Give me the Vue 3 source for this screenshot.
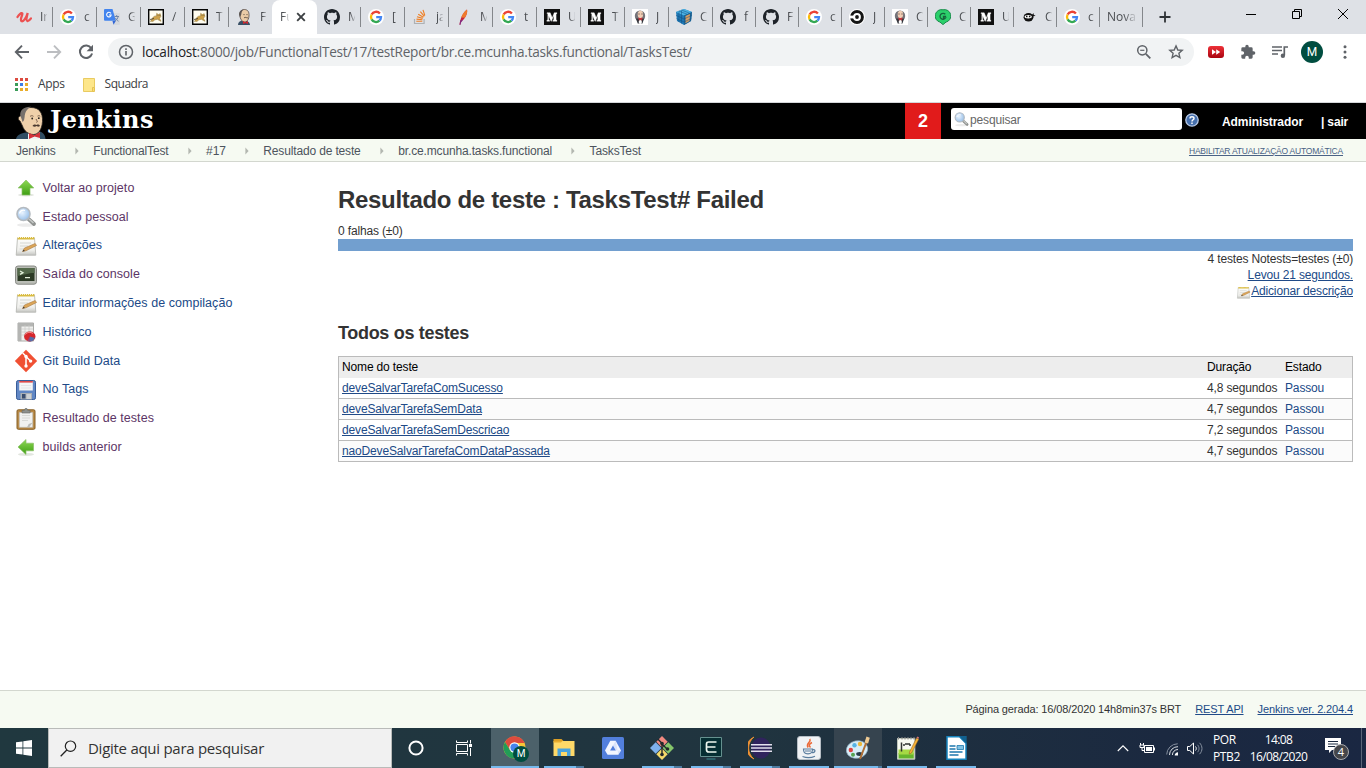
<script setup>
const tabs = [
  { icon: 'udemy', text: 'Ir' },
  { icon: 'google', text: 'c' },
  { icon: 'translate', text: 'G' },
  { icon: 'tomcat', text: '/' },
  { icon: 'tomcat', text: 'T' },
  { icon: 'butler', text: 'F', bare: true },
  { text: 'Fu', active: true },
  { icon: 'github', text: 'M' },
  { icon: 'google', text: '[' },
  { icon: 'stack', text: 'ja' },
  { icon: 'feather', text: 'M' },
  { icon: 'google', text: 't' },
  { icon: 'medium', text: 'U' },
  { icon: 'medium', text: 'T' },
  { icon: 'butlerbox', text: 'J' },
  { icon: 'cube', text: 'C' },
  { icon: 'github', text: 'f', slim: true },
  { icon: 'github', text: 'F', slim: true },
  { icon: 'google', text: 'c', slim: true },
  { icon: 'circle', text: 'J', slim: true },
  { icon: 'butlerbox', text: 'C', slim: true },
  { icon: 'green', text: 'C', slim: true },
  { icon: 'medium', text: 'U', slim: true },
  { icon: 'ninja', text: 'C', slim: true },
  { icon: 'google', text: 'c', slim: true },
  { text: 'Nova', wide: true, slim: true }
]

const crumbs = [
  'Jenkins',
  'FunctionalTest',
  '#17',
  'Resultado de teste',
  'br.ce.mcunha.tasks.functional',
  'TasksTest'
]

const tasks = [
  { icon: 'up', text: 'Voltar ao projeto', seen: true },
  { icon: 'search', text: 'Estado pessoal', seen: true },
  { icon: 'notepad', text: 'Alterações' },
  { icon: 'terminal', text: 'Saída do console', seen: true },
  { icon: 'notepad', text: 'Editar informações de compilação' },
  { icon: 'history', text: 'Histórico' },
  { icon: 'git', text: 'Git Build Data' },
  { icon: 'floppy', text: 'No Tags' },
  { icon: 'clipboard', text: 'Resultado de testes', seen: true },
  { icon: 'left', text: 'builds anterior', seen: true }
]

const rows = [
  { name: 'deveSalvarTarefaComSucesso', time: '4,8 segundos' },
  { name: 'deveSalvarTarefaSemData', time: '4,7 segundos' },
  { name: 'deveSalvarTarefaSemDescricao', time: '7,2 segundos' },
  { name: 'naoDeveSalvarTarefaComDataPassada', time: '4,7 segundos' }
]

const apps = [
  { icon: 'chrome', state: 'current' },
  { icon: 'explorer', state: 'stacked' },
  { icon: 'drive', state: 'idle' },
  { icon: 'gitbash', state: 'stacked' },
  { icon: 'editor', state: 'stacked' },
  { icon: 'eclipse', state: 'stacked' },
  { icon: 'java', state: 'open' },
  { icon: 'paint', state: 'lit' },
  { icon: 'npp', state: 'open' },
  { icon: 'writer', state: 'open' }
]
</script>

<template>
  <div class="screen">
    <svg class="sprite" width="0" height="0" aria-hidden="true">
      <defs>
        <linearGradient id="gGreen" x1="0" y1="0" x2="0" y2="1"><stop offset="0" stop-color="#8ed954" /><stop offset="1" stop-color="#3f9f14" /></linearGradient>
        <linearGradient id="gGray" x1="0" y1="0" x2="0" y2="1"><stop offset="0" stop-color="#fdfdfb" /><stop offset=".7" stop-color="#f0f0ed" /><stop offset="1" stop-color="#c4c5c1" /></linearGradient>
        <linearGradient id="gRed" x1="0" y1="0" x2="0" y2="1"><stop offset="0" stop-color="#ee3138" /><stop offset="1" stop-color="#a90510" /></linearGradient>
        <radialGradient id="gLens" cx=".4" cy=".4" r=".7"><stop offset="0" stop-color="#eaf4ff" /><stop offset="1" stop-color="#8eb9e6" /></radialGradient>

        <symbol id="udemy" viewBox="0 0 16 16"><path d="M1.500 8C3 5.500 5.500 3.300 6.300 4.400 7 5.500 3.600 10.600 5.400 12c2 1.200 5-3.500 6.300-8-.9 3.500-2 7.500-.4 8 1.500.3 2.700-1.200 3.700-2.600" fill="none" stroke="#ec5252" stroke-width="2.300" stroke-linecap="round" /></symbol>
        <symbol id="google" viewBox="0 0 16 16">
          <circle cx="8" cy="8" r="8" fill="#fff" />
          <g fill="none" stroke-width="2.300"><path d="M11.900 4.500A5 5 0 0 0 3.600 5.600" stroke="#ea4335" /><path d="M3.600 5.600a5 5 0 0 0 0 4.800" stroke="#fbbc05" /><path d="M3.600 10.400a5 5 0 0 0 7.800 1.300" stroke="#34a853" /><path d="M11.400 11.700A5 5 0 0 0 13 8.200H8.200" stroke="#4285f4" /></g>
        </symbol>
        <symbol id="translate" viewBox="0 0 16 16">
          <path d="M6.500 4H15a1 1 0 0 1 1 1v10a1 1 0 0 1-1 1H9.500z" fill="#d5d8dc" />
          <path d="M1 0h7.500l3.400 11.800H1a1 1 0 0 1-1-1V1a1 1 0 0 1 1-1z" fill="#4284ee" /><path d="m8.500 12 3.400-.2-2.400 4z" fill="#3367d6" />
          <path d="M6.900 4.400A2.300 2.300 0 1 0 7.200 6H5" fill="none" stroke="#fff" stroke-width="1.100" />
          <path d="M10.500 7.500H15M12.700 6v1.500m1.400 0c-.4 2-1.400 3.500-3 4.500m.4-3c.7 1.700 1.800 2.600 3 3.200" fill="none" stroke="#7086a8" />
        </symbol>
        <symbol id="tomcat" viewBox="0 0 16 16">
          <path d="M.7.700h14.600v14.600H.7z" fill="#fffdf0" stroke="#050505" stroke-width="1.400" />
          <path d="m2.500 12.500 2-3.400c1-1.500 2-2.300 4-2.200l.2-2.600 1.500 1.300 2-.9.600 2.800-1.300 1.800 1.500 3-1.600-.8-2-1.200-2.500.5-2 1.700-1-.2z" fill="#cda24a" stroke="#8c743a" stroke-width=".5" /><path d="m2 10.500 4-1m4-3 .5.500m1.700-.8-.5.600" stroke="#403a2e" stroke-width=".8" />
        </symbol>
        <symbol id="butler" viewBox="0 0 16 16">
          <path d="M2 16c0-3 2-4.300 5-4.500 4-.2 6.800 1.500 7 4.500z" fill="#395066" /><path d="M4 6.500C3.500 2.500 5.500.5 8.300.5c3.600 0 5 2.500 4.700 6.500-.2 3.500-2 6-4.400 6S5 11 4 8z" fill="#eacba6" stroke="#453a36" stroke-width=".7" />
          <path d="M4 8C1.800 5 3.600.400 8 .5 5.600 1.600 5.600 4 5.200 5.700z" fill="#5c5552" /><path d="M7.500 5.600h1m2 0h1M8 9c1-1 2-.6 2.200-.2 1-.4 1.600 0 2 .6" stroke="#4a3c35" stroke-width=".9" fill="none" /><path d="m7 12 2.500 1.200L12 12v3l-2.500-1L7 15z" fill="#cf2730" />
        </symbol>
        <symbol id="butlerbox" viewBox="0 0 16 16"><path d="M0 0h16v16H0z" fill="#fff" /><ellipse cx="8" cy="7" rx="5.200" ry="5.600" fill="#75747a" /><ellipse cx="8.400" cy="5.400" rx="2.700" ry="3.600" fill="#efcdb4" /><path d="M6.500 5h1m2 0h1" stroke="#4b3b36" /><path d="M4 9.500h8l-1.500 5H5.700z" fill="#33363c" /><path d="m6.500 9.200 3.600 2m.2-2-3.600 2" stroke="#c3353b" stroke-width="1.500" /><ellipse cx="8.300" cy="13" rx="1.600" ry="1.900" fill="#fff" /></symbol>
        <symbol id="github" viewBox="0 0 16 16"><path fill="#1e2329" d="M8 0C3.580 0 0 3.580 0 8c0 3.540 2.290 6.530 5.470 7.590.4.070.55-.17.55-.38 0-.19-.01-.82-.01-1.490-2.010.37-2.530-.49-2.690-.94-.09-.23-.48-.94-.82-1.130-.28-.15-.68-.52-.01-.53.63-.01 1.080.58 1.230.82.72 1.210 1.870.87 2.330.66.070-.52.28-.87.51-1.070-1.780-.2-3.640-.89-3.640-3.950 0-.87.31-1.590.82-2.150-.08-.2-.36-1.020.08-2.120 0 0 .67-.21 2.200.82.64-.18 1.320-.27 2-.27s1.360.09 2 .27c1.530-1.040 2.200-.82 2.200-.82.44 1.100.16 1.920.08 2.120.51.56.82 1.270.82 2.150 0 3.070-1.870 3.750-3.650 3.950.29.25.54.73.54 1.480 0 1.070-.01 1.930-.01 2.200 0 .21.15.46.55.38A8.010 8.010 0 0 0 16 8c0-4.420-3.580-8-8-8z" /></symbol>
        <symbol id="stack" viewBox="0 0 16 16"><path d="M2.500 10v4.500h9.600V10" fill="none" stroke="#aeb1b4" stroke-width="1.200" /><path d="M4.300 12.300h6M4.500 10.100l5.900.6M5 7.700l5.700 1.700M6.200 5.200l5.200 3M8.400 2.600l3.900 4.700M11 .8l1.800 5.700" stroke="#ef7f24" stroke-width="1.100" /></symbol>
        <symbol id="feather" viewBox="0 0 16 16"><path d="M3.500 15.800C4 10 7 3.500 11 .5c.8 3-1 7.500-3.400 10-1.800 1.500-2.800 2.300-3.300 5.300z" fill="#c6263f" /><path d="M11 .5C7.700 3 6 6 5.300 8.500L8.800 8.800C11 5.500 11.500 3 11 .5z" fill="#ef7b2c" /><path d="M3.500 15.800 4.500 11l2.500.3c-1.500 1.300-2.200 2-2.500 4.500z" fill="#7f2b84" /></symbol>
        <symbol id="medium" viewBox="0 0 16 16"><path d="M0 0h16v16H0z" fill="#101010" /><path d="M3 3.800h3.200L8.300 9l1.900-5.200H13v.6l-.9.700v5.800l.9.700v.6H8.800v-.6l1-.7V6.200l-2.400 6H7L4.600 6.400v4l1.100 1.300v.5H2.800v-.5l1-1.300V5.100L3 4.300z" fill="#fff" stroke="#fff" stroke-width=".4" /></symbol>
        <symbol id="cube" viewBox="0 0 16 16"><path d="m8 0 8 3-1 9-7 4-7-4L0 3z" fill="#1d78b5" /><path d="m8 0 8 3-8 3.500L0 3z" fill="#4bb3e4" /><path d="M8 6.500 16 3l-1 9-7 4z" fill="#1d6292" /><path d="m9.500 7 4.500-2-.5 7-4 2.200z" fill="#d9a064" /><path d="M0 6.300 8 10l7.800-3.700M.5 9.500 8 13l7.300-3.500M3 2.500 2.800 13M5.500 1.500v13M2.700 2 11 5.200M5.400 1l8.200 3.200" fill="none" stroke="#154f80" stroke-width=".5" /></symbol>
        <symbol id="circle" viewBox="0 0 16 16"><circle cx="8" cy="8" r="8" fill="#fff" /><circle cx="8" cy="8" r="5.400" fill="none" stroke="#161616" stroke-width="3" /><path d="M0 6.600h5v2.800H0z" fill="#fff" /><circle cx="8" cy="8" r="1.900" fill="#161616" /></symbol>
        <symbol id="green" viewBox="0 0 16 16"><path d="M8 .8a6.300 6.300 0 0 1 3 12.300L8 15.600l-3-2.500A6.300 6.300 0 0 1 8 .8z" fill="#2bd06b" stroke="#198b4b" /><path d="M10.300 5.300A3 3 0 1 0 10.500 9H8.500V7.400h2.600" fill="none" stroke="#17643c" stroke-width="1.300" /></symbol>
        <symbol id="ninja" viewBox="0 0 16 16"><ellipse cx="7.500" cy="8.200" rx="4.900" ry="4.200" fill="#111" /><path d="m11 6 1.500-2 .3 2 1.800.4-2.800 1.400z" fill="#111" /><ellipse cx="7.200" cy="7.800" rx="3.600" ry="1.700" fill="#fff" /><path d="M5 7.500h1.500m1.400 0h1.500" stroke="#111" stroke-width="1.300" /></symbol>

        <symbol id="up" viewBox="0 0 24 24"><ellipse cx="12" cy="19" rx="8" ry="1.500" fill="#e2e6df" /><path d="m12 4 7.800 8H16v7H8v-7H4.200z" fill="url(#gGreen)" stroke="#8bbf69" stroke-width=".7" /></symbol>
        <symbol id="left" viewBox="0 0 24 24"><ellipse cx="12" cy="19.400" rx="8" ry="1.500" fill="#e2e6df" /><path d="m4 12 8-7.500v3.700h7.500v7.600H12v3.700z" fill="url(#gGreen)" stroke="#8bbf69" stroke-width=".7" /></symbol>
        <symbol id="search" viewBox="0 0 24 24"><ellipse cx="12" cy="20" rx="9" ry="1.700" fill="#ececec" /><path d="m14.500 14 5.500 5" stroke="#8f9290" stroke-width="3.800" stroke-linecap="round" /><path d="m15 14 4.500 4" stroke="#c5c8c6" stroke-width="1.600" /><circle cx="9.500" cy="9" r="6.500" fill="url(#gLens)" stroke="#b4bac0" stroke-width="1.600" /><path d="M5.500 8.500c.5-2.500 3-4 5.500-3" stroke="#fff" fill="none" stroke-width="1.300" /></symbol>
        <symbol id="notepad" viewBox="0 0 24 24"><path d="M3.500 4h17l1.300 17.200H2.200z" fill="url(#gGray)" stroke="#b3b4af" stroke-width=".8" /><path d="M3.700 3h16.600v2.500H3.500z" fill="#d9bc42" /><path d="M4 3.300h16" stroke="#fff" stroke-dasharray="1 1" /><path d="M6 9h11M6 12h8M5.500 15h6" stroke="#d5d7d2" /><path d="m8.500 17.500 2-3.500 10.700-4.500 1.300 2L12 16.800z" fill="#dba557" stroke="#aa7a43" stroke-width=".6" /><path d="m8.500 17.500 1-1.800 1.500 1.200z" fill="#333" /></symbol>
        <symbol id="terminal" viewBox="0 0 24 24"><rect x="1.500" y="3" width="21" height="18.200" rx="2.500" fill="#babdb6" stroke="#888a85" /><path d="M3.500 5h17v13h-17z" fill="#2c3a25" /><path d="M3.500 5h17v5c-7 0-10 2-17 3z" fill="#53684a" /><path d="m6 8 3 1.700L6 11.400m5 3.300h5" stroke="#e4f1dc" stroke-width="1.300" fill="none" /></symbol>
        <symbol id="history" viewBox="0 0 24 24"><path d="M4 3h15.500v18H4z" fill="#efefed" stroke="#aaaba8" /><path d="M4 3h15v3.500H4zm0 0h3.500v18H4z" fill="#b4b5b3" /><path d="M7 9h12M7 12h12M7 15h12M11 5v15M15 5v15" stroke="#c8c9c6" stroke-width=".7" /><ellipse cx="15.800" cy="16.500" rx="5.700" ry="5" fill="#d6272c" /><path d="M15.800 16.500 21 18c-.8 2-2.600 3.300-5.200 3.500z" fill="#5570aa" /><path d="m15.800 16.500-2.400 4.800 3 .2z" fill="#8a4d82" /><path d="M11.500 14.500c1.500-2.500 5-2.800 7.300-1" stroke="#f59795" fill="none" /></symbol>
        <symbol id="git" viewBox="0 0 24 24"><path d="m12 .8 11.200 11.200L12 23.200.8 12z" fill="#f05033" /><path d="m8.700 4 3.300 3.300v9.500m0-9.300 4.500 4.500" fill="none" stroke="#fff" stroke-width="1.500" /><circle cx="12" cy="7.500" r="1.700" fill="#fff" /><circle cx="12" cy="17" r="1.700" fill="#fff" /><circle cx="16.600" cy="12.100" r="1.700" fill="#fff" /></symbol>
        <symbol id="floppy" viewBox="0 0 24 24"><rect x="2.500" y="2.500" width="19" height="19" rx="1.800" fill="#6187c4" stroke="#385c98" /><path d="M5.200 3h13.600v9.500H5.200z" fill="#f4f5f6" /><path d="M5.200 3h13.600v1.600H5.200z" fill="#dd4a4b" /><path d="M7 7.500h10M7 10h10" stroke="#e3e5e8" /><path d="M6.500 15h11.500v6.500H6.500z" fill="#abb0b5" /><path d="M8 16h3.500v4.500H8z" fill="#394d6f" /><path d="M12.500 16H17v5h-4.500z" fill="#cdd1d4" /></symbol>
        <symbol id="clipboard" viewBox="0 0 24 24"><rect x="3" y="2.800" width="18" height="19.500" rx="1.300" fill="#b98a47" stroke="#876026" /><path d="M5.300 5.500h13.400v14.800H5.300z" fill="#f0f1f0" stroke="#b8b9b5" stroke-width=".6" /><path d="m18.700 15.500-3.500 4.800-2-.2 1.500-3z" fill="#b9bbb9" /><path d="M8 8.500h8M8 11h8M8 13.500h6" stroke="#d8dad7" /><path d="M8 6V3.500l2.500-.3.700-1.700h1.700l.7 1.700 2.500.3V6z" fill="#8d918e" stroke="#656966" stroke-width=".6" /></symbol>

        <symbol id="chrome" viewBox="0 0 24 24"><circle cx="11.500" cy="11.500" r="11" fill="#f6c638" /><path d="M2 6a11 11 0 0 1 19.700 1H11.500L7 14z" fill="#dd4b3e" /><path d="M2 6a11 11 0 0 0 8.500 16.500L15 14l-8.200-.3z" fill="#229c57" /><circle cx="11.500" cy="11.500" r="5.200" fill="#fff" /><circle cx="11.500" cy="11.500" r="4.100" fill="#4784ee" /></symbol>
        <symbol id="explorer" viewBox="0 0 24 24"><path d="M1.500 3h8l2 2h-10z" fill="#dc9f26" /><path d="M1.500 5h21v15h-21z" fill="#ffd968" /><path d="M1.500 5h9l-1.500 1.500H1.500z" fill="#e7ac2e" /><path d="M5.500 20v-7.500h13V20H15v-4H9v4z" fill="#4aa3dd" /></symbol>
        <symbol id="drive" viewBox="0 0 24 24"><rect x="1" y="1" width="22" height="22" rx="1.500" fill="#527fdc" /><path d="M9.300 4.800h5.400L20 14.500l-2.600 4.200H6.600L4 14.500z" fill="#f3f6ff" /><path d="m12 9.500 2.900 5H9.100z" fill="#527fdc" /><path d="M17.400 18.700 20 14.500h-5.100L12 9.500l2.700-4.700" fill="#bfcff3" opacity=".45" /></symbol>
        <symbol id="gitbash" viewBox="0 0 24 24"><path d="m12 0 5.700 5.700L12 11.400 6.300 5.700z" fill="#f18980" /><path d="m5.700 6.300 5.700 5.700-5.700 5.700L0 12z" fill="#7eb1ed" /><path d="M18.300 6.300 24 12l-5.700 5.700-5.700-5.700z" fill="#85c66b" /><path d="m12 12.600 5.700 5.700L12 24l-5.700-5.700z" fill="#f5d96a" /><path d="m8 3.200 4 4v12M12 8l5 5" fill="none" stroke="#24292b" stroke-width="1.400" /><g fill="#24292b"><circle cx="12" cy="7.500" r="1.800" /><circle cx="12" cy="18.500" r="1.800" /><circle cx="17.500" cy="13" r="1.800" /></g></symbol>
        <symbol id="editor" viewBox="0 0 24 24"><path d="M1.500 1.500h21v19h-21z" fill="#052e32" stroke="#65918f" /><path d="M17.500 6H9.800Q7.500 6 7.500 8v5.500Q7.500 16 9.800 16h7.700M8 11h8.500" fill="none" stroke="#edf7ee" stroke-width="1.700" /><path d="M7.500 23h9" stroke="#368c93" /></symbol>
        <symbol id="eclipse" viewBox="0 0 24 24"><path d="M6 1A12 12 0 0 0 6 23 14 14 0 0 1 6 1z" fill="#f29334" stroke="#f29334" stroke-width=".8" /><ellipse cx="13" cy="12" rx="9.600" ry="10.600" fill="#30235d" /><path d="M3 8.800h21M3 12h21M3 15.200h21" stroke="#e4e0ef" stroke-width="1.500" /></symbol>
        <symbol id="java" viewBox="0 0 24 24"><rect x=".5" y=".5" width="23" height="23" rx="2.500" fill="#f0f2f4" stroke="#b6bec5" /><path d="M12.800 3c2 3.300-4.700 4-1.700 8.500M15 6.500c-3 1.500-3.500 3-1.500 5" fill="none" stroke="#eb6937" stroke-width="1.500" /><path d="M6.500 13h9c0 3.500-1 4.800-4.500 4.800S6.500 16.500 6.500 13zm9 .7c3.500-.7 3.200 3-.5 3M5.500 20.500c4 1.500 9 1.300 12.500-.3" fill="none" stroke="#5a7d9e" stroke-width="1.200" /><path d="M8 15h6" stroke="#5a7d9e" /></symbol>
        <symbol id="paint" viewBox="0 0 24 24"><ellipse cx="11" cy="13.500" rx="10.800" ry="8.700" fill="#d8edf7" stroke="#8dacc0" stroke-width=".7" transform="rotate(-12 11 13.500)" /><ellipse cx="13.500" cy="18" rx="3.300" ry="1.900" fill="#293d4a" /><circle cx="4.800" cy="14" r="2.200" fill="#dc4242" /><circle cx="8.500" cy="9.200" r="2.200" fill="#57b3e4" /><circle cx="14" cy="8" r="2.200" fill="#edb83b" /><circle cx="7" cy="18.800" r="2" fill="#56a452" /><path d="m14 23 6.500-17" stroke="#b06f35" stroke-width="2" /><path d="m18.500 6.500 2-6 3.300 1.200-1.700 5.800z" fill="#efcb94" /></symbol>
        <symbol id="npp" viewBox="0 0 24 24"><path d="M2.500 2.500h17.300v20.700H2.500z" fill="#f6f9f1" stroke="#bfc6bb" /><path d="M3.500 17h15.300v5.500H3.500z" fill="#66b52d" /><path d="M3.500 13.500h15.300v5H3.500z" fill="#a6d944" /><path d="M3.500 1v2.500M7 1v2.500m3-2.500v2.500m3-2.500v2.500m3-2.500v2.500m3-2.500v2.500" stroke="#888" /><path d="M6.500 6.500v9M9 8v2m1-2h5m0 0v2" fill="none" stroke="#303532" stroke-width="1.500" /><path d="m14.500 16 7-14 2.400 1-7.400 14-2.300 1z" fill="#f7b338" stroke="#885d20" stroke-width=".5" /><path d="m21.500 2 .8-1.500 1.700.8-.6 1.500z" fill="#d37474" /></symbol>
        <symbol id="writer" viewBox="0 0 24 24"><path d="M3 .8h12.500L22 7.300v16H3z" fill="#fff" stroke="#1583bd" stroke-width="1.500" /><path d="M15 0h7.700v8z" fill="#12618f" /><path d="M5.500 10h6m-6 3h6m-6 3h13m-13 3h9" stroke="#1c77ad" stroke-width="1.400" /><path d="M13 9.500h6.500v4H13z" fill="#7fc1e3" stroke="#1c77ad" stroke-width=".8" /></symbol>
      </defs>
    </svg>

    <header class="tabstrip">
      <div v-for="(t, i) in tabs" :key="i" class="tab" :class="{ active: t.active, slim: t.slim, bare: t.bare }">
        <svg v-if="t.icon" class="favicon"><use :href="'#' + t.icon" /></svg>
        <span class="tabtext" :class="{ wide: t.wide }">{{ t.text }}</span>
        <svg v-if="t.active" class="closetab" viewBox="0 0 10 10"><path d="m1.200 1.200 7.600 7.600m0-7.600L1.200 8.800" stroke="#3c4043" stroke-width="1.900" /></svg>
      </div>
      <svg class="plus" viewBox="0 0 12 12"><path d="M6 .5v11M.5 6h11" stroke="#2f3337" stroke-width="1.800" /></svg>
      <div class="winbtns">
        <svg viewBox="0 0 12 12"><path d="M1 6.500h10" stroke="#000" /></svg>
        <svg viewBox="0 0 12 12"><path d="M1.500 3.500h7v7h-7zm2 0v-2h7v7h-2" fill="none" stroke="#000" /></svg>
        <svg viewBox="0 0 12 12"><path d="m1 1 10 10M11 1 1 11" stroke="#000" /></svg>
      </div>
    </header>

    <div class="toolbar">
      <svg class="nav" viewBox="0 0 16 16"><path d="M15 8H2.500M8 1.700 1.800 8 8 14.300" fill="none" stroke="#5f6368" stroke-width="1.900" /></svg>
      <svg class="nav" viewBox="0 0 16 16"><path d="M1 8h12.500M8 1.700 14.200 8 8 14.300" fill="none" stroke="#bcbec1" stroke-width="1.900" /></svg>
      <svg class="nav" viewBox="0 0 16 16"><path d="M13.300 4.200A6.200 6.200 0 1 0 14.100 9.500" fill="none" stroke="#5f6368" stroke-width="2" /><path d="M15 .8v6.400H8.600z" fill="#5f6368" /></svg>
      <div class="omnibox">
        <svg class="info" viewBox="0 0 16 16"><circle cx="8" cy="8" r="6.500" fill="none" stroke="#5f6368" stroke-width="1.500" /><path d="M8 7v4.500M8 4.200v1.700" stroke="#5f6368" stroke-width="1.600" /></svg>
        <span class="url"><b>localhost</b>:8000/job/FunctionalTest/17/testReport/br.ce.mcunha.tasks.functional/TasksTest/</span>
        <svg class="zoomout" viewBox="0 0 16 16"><circle cx="6.300" cy="6.300" r="4.600" fill="none" stroke="#5f6368" stroke-width="1.500" /><path d="m9.800 9.800 4.500 4.500" stroke="#5f6368" stroke-width="1.800" /><path d="M4.200 6.300h4.200" stroke="#5f6368" stroke-width="1.200" /></svg>
        <svg class="star" viewBox="0 0 16 16"><path d="m8 1.900 1.800 4.100 4.400.4-3.300 2.900 1 4.300L8 11.300l-3.900 2.300 1-4.300-3.300-2.900 4.400-.4z" fill="none" stroke="#5f6368" stroke-width="1.400" /></svg>
      </div>
      <div class="extensions">
        <svg class="ff" viewBox="0 0 16 12"><rect width="16" height="12" rx="3" fill="url(#gRed)" /><path d="m4 3.300 4 2.700-4 2.700zm4.200 0 4 2.700-4 2.700z" fill="#fff" /></svg>
        <svg class="ext" viewBox="0 0 24 24"><path fill="#5f6368" d="M20.500 11H19V7a2 2 0 0 0-2-2h-4V3.500a2.500 2.500 0 0 0-5 0V5H4a2 2 0 0 0-2 2v3.800h1.500a2.700 2.700 0 0 1 0 5.400H2V20a2 2 0 0 0 2 2h3.800v-1.500a2.700 2.700 0 0 1 5.400 0V22H17a2 2 0 0 0 2-2v-4h1.500a2.500 2.500 0 0 0 0-5z" /></svg>
        <svg class="ext music" viewBox="0 0 16 16"><path d="M0 3h10M0 6.500h10M0 10h6" stroke="#5f6368" stroke-width="1.500" /><path d="M12.300 11V3H16" fill="none" stroke="#5f6368" stroke-width="1.700" /><circle cx="10.900" cy="11.700" r="2.200" fill="#5f6368" /></svg>
        <span class="avatar">M</span>
        <svg class="dots" viewBox="0 0 4 16"><g fill="#5f6368"><circle cx="2" cy="2.700" r="1.500" /><circle cx="2" cy="8" r="1.500" /><circle cx="2" cy="13.300" r="1.500" /></g></svg>
      </div>
    </div>

    <div class="bookmarks">
      <svg class="appsgrid" viewBox="0 0 13 13"><path d="M0 0h3v3H0zm5 0h3v3H5zm5 0h3v3h-3z" fill="#dc4b40" /><path d="M0 5h3v3H0zm0 5h3v3H0z" fill="#3a9c59" /><path d="M5 5h3v3H5z" fill="#3c7ee8" /><path d="M10 5h3v3h-3zm-5 5h3v3H5zm5 0h3v3h-3z" fill="#e9ad2b" /></svg>
      <span class="bm">Apps</span>
      <svg class="folder" viewBox="0 0 12 14"><path d="M.5.500h11v9h-1.500v4H.5z" fill="#fde68a" stroke="#e9cb61" /><path d="M9.500 9.500h2v4h-2z" fill="#fbdc70" stroke="#e4c254" /></svg>
      <span class="bm squadra">Squadra</span>
    </div>

    <div class="jheader">
      <svg class="jbutler" viewBox="0 0 30 33">
        <path d="M0 33c1-4 5-6 10-6.500l14-1c3 1 5 3 5.500 7.500z" fill="#2f4d63" /><path d="m12 26 5 5 7-5v7H12z" fill="#eef1f2" />
        <path d="M4 15c-2.500-1-2-5 .5-5C5 4 9 1.500 15 1.500c8 0 12 5 11.500 14C26 24 22 28.500 17.500 28.500 12 28.500 8 24.500 6.500 20z" fill="#efd0aa" stroke="#27211d" stroke-width=".8" />
        <path d="M4.500 10C3.500 4 8 .5 15 .8 11 3 9 6 8.600 11c-.3 2-.5 4-2 5-.8-2-1.200-4-2.100-6z" fill="#77706b" />
        <path d="M14 10.500c1-1 2.500-1 3.500-.2m4-.2c1-.6 2-.5 2.700.2M20 13c1 2 2 3 .5 3.500" fill="none" stroke="#6c5444" stroke-width=".9" /><path d="M16.500 20c1.200-2.200 3.500-1.800 4.100-.9 1.200-1 2.700-.3 3.400.8-1.700 1.200-2.700.7-3.500.2-1.200.9-2.500.9-4-.1z" fill="#4a3a31" /><circle cx="16.200" cy="12.500" r=".9" fill="#29221e" /><circle cx="22.800" cy="12.200" r=".9" fill="#29221e" />
        <path d="m13 27 5.500 2.300L24 26v6l-5.500-1.500L13 33z" fill="#d3313a" />
      </svg>
      <span class="brand">Jenkins</span>
      <span class="alert">2</span>
      <div class="searchbox"><svg class="lens"><use href="#search" /></svg><span>pesquisar</span></div>
      <svg class="help" viewBox="0 0 14 14"><circle cx="7" cy="7" r="6.200" fill="#4670ae" stroke="#b9cae6" stroke-width="1.300" /><path d="M5 5.400C5 3.200 9 3.200 9 5.400 9 6.800 7 6.800 7 8.500M7 9.600V11" fill="none" stroke="#fff" stroke-width="1.400" /></svg>
      <span class="admin">Administrador</span>
      <span class="logout">| sair</span>
    </div>

    <nav class="crumbbar">
      <template v-for="(c, i) in crumbs" :key="c">
        <svg v-if="i" class="sep" viewBox="0 0 4 8"><path d="m.4.6 3.200 3.400L.4 7.400z" fill="#b3b7b0" /></svg>
        <span class="crumb">{{ c }}</span>
      </template>
      <a class="auto">HABILITAR ATUALIZAÇÃO AUTOMÁTICA</a>
    </nav>

    <main class="content">
      <aside class="side">
        <div v-for="t in tasks" :key="t.text" class="task" :class="{ seen: t.seen }">
          <svg class="taskicon"><use :href="'#' + t.icon" /></svg>
          <span>{{ t.text }}</span>
        </div>
      </aside>
      <section class="panel">
        <h1>Resultado de teste : TasksTest# Failed</h1>
        <div class="fails">0 falhas (±0)</div>
        <div class="bar"></div>
        <div class="totals">
          <span>4 testes Notests=testes (±0)</span>
          <a>Levou 21 segundos.</a>
          <span class="desc"><svg class="mini"><use href="#notepad" /></svg><a>Adicionar descrição</a></span>
        </div>
        <h2>Todos os testes</h2>
        <div class="table">
          <div class="row head"><span class="name">Nome do teste</span><span class="time">Duração</span><span class="status">Estado</span></div>
          <div v-for="r in rows" :key="r.name" class="row"><span class="name"><a>{{ r.name }}</a></span><span class="time">{{ r.time }}</span><span class="status pass">Passou</span></div>
        </div>
      </section>
    </main>

    <footer class="foot">
      <span class="gen">Página gerada: 16/08/2020 14h8min37s BRT</span>
      <a class="rest">REST API</a>
      <a class="ver">Jenkins ver. 2.204.4</a>
    </footer>

    <div class="taskbar">
      <div class="start"><svg viewBox="0 0 16 16"><path d="m0 2.300 6.500-.9v6.200H0zm7.300-1L16 0v7.600H7.300zM0 8.400h6.500v6.200L0 13.700zm7.300 0H16V16l-8.700-1.300z" fill="#fff" /></svg></div>
      <div class="winsearch">
        <svg viewBox="0 0 17 17"><circle cx="10.500" cy="6.200" r="5.200" fill="none" stroke="#222" stroke-width="1.200" /><path d="M6.800 10 .7 16.200" stroke="#222" stroke-width="1.300" /></svg>
        <span>Digite aqui para pesquisar</span>
      </div>
      <div class="sys"><svg viewBox="0 0 16 16"><circle cx="8" cy="8" r="6.600" fill="none" stroke="#fff" stroke-width="2" /></svg></div>
      <div class="sys view"><svg viewBox="0 0 16 16"><path d="M.5.500v2h11v-2m-11 15v-2h11v2M.5 4.500h11v7H.5zM14.500 0v3.500m0 4.500v8" fill="none" stroke="#fff" /><path d="M13 4h3v3h-3z" fill="#fff" /></svg></div>
      <div class="apps">
        <div v-for="a in apps" :key="a.icon" class="app" :class="a.state">
          <svg class="appicon"><use :href="'#' + a.icon" /></svg>
          <span v-if="a.icon === 'chrome'" class="profile">M</span>
        </div>
      </div>
      <div class="tray">
        <svg class="chev" viewBox="0 0 12 8"><path d="m.8 7 5.200-5.200L11.200 7" fill="none" stroke="#fff" stroke-width="1.100" /></svg>
        <svg class="batt" viewBox="0 0 17 12"><path d="M5.500 3.500h9v7h-9zM15.500 5.500v3" fill="none" stroke="#fff" /><path d="M7 5h6v4H7z" fill="#fff" /><path d="M1 3h4v2.500H1zm.5-2v2m3-2v2M3 5v3.500h2" fill="none" stroke="#fff" /></svg>
        <svg class="wifi" viewBox="0 0 13 13"><path d="M.7 11.500A11 11 0 0 1 11.700.8" fill="none" stroke="#8791a0" /><path d="M3.500 12A8.300 8.300 0 0 1 12 3.700M6.400 12A5.500 5.500 0 0 1 12 6.500" fill="none" stroke="#d8dce1" /><path d="M8.700 12.500c0-2 1.500-3.300 3.300-3.300v3.300z" fill="#fff" /></svg>
        <svg class="vol" viewBox="0 0 16 13"><path d="M.5 4.500h2.300L6.500 1v11L2.800 8.500H.5zM8.500 4.500c1 1.200 1 2.800 0 4" fill="none" stroke="#fff" /><path d="M10.500 2.800c2 2 2 5.400 0 7.400m2-9.400c3.300 3.300 3.300 8.100 0 11.400" fill="none" stroke="#8791a0" /></svg>
        <div class="lang"><span>POR</span><span>PTB2</span></div>
        <div class="clock"><span>14:08</span><span>16/08/2020</span></div>
        <div class="notif"><svg viewBox="0 0 16 15"><path d="M0 0h16v12H7l-3 3v-3H0z" fill="#fff" /><path d="M3 3.500h10M3 6h10M3 8.500h7" stroke="#1b2a40" /></svg><span class="count">4</span></div>
        <i class="peek"></i>
      </div>
    </div>
  </div>
</template>

<style>
html, body { margin: 0; overflow: hidden; background: #fff; }
</style>

<style scoped>
* { box-sizing: border-box; }
.screen { width: 1366px; height: 768px; display: flex; flex-direction: column; overflow: hidden; font-family: "Liberation Sans", Arial, sans-serif; font-size: 12px; letter-spacing: -0.15px; color: #333; white-space: nowrap; }
.sprite { position: absolute; }
svg { display: block; flex: none; }
a { color: #204a87; text-decoration: underline; }

.tabstrip { height: 34px; flex: none; display: flex; align-items: center; background: #dee1e6; padding-left: 8px; font-family: "Open Sans", "Noto Sans", sans-serif; letter-spacing: 0; }
.tab { width: 44px; height: 34px; flex: none; display: flex; align-items: center; padding-left: 8px; position: relative; }
.tab.slim { width: 43px; }
.tab::after { content: ""; position: absolute; right: -1px; top: 7px; width: 1px; height: 20px; background: #84878b; }
.tab.bare::after, .tab.active::after { display: none; }
.tab.active { background: #fff; border-radius: 8px 8px 0 0; width: 45px; margin-right: -1px; }
.favicon { width: 16px; height: 16px; margin-right: 8px; }
.tabtext { width: 7px; overflow: hidden; font-size: 12px; color: #4a4d51; line-height: 20px; mask-image: linear-gradient(90deg, #000 35%, transparent 110%); }
.tabtext.wide { width: 28px; mask-image: linear-gradient(90deg, #000 60%, transparent 110%); }
.active .tabtext { width: 9px; }
.closetab { width: 10px; height: 10px; margin-left: 7px; }
.plus { width: 12px; height: 12px; margin-left: 17px; }
.winbtns { margin-left: auto; display: flex; gap: 34px; padding-right: 17px; margin-bottom: 6px; }
.winbtns svg { width: 12px; height: 12px; }

.toolbar { height: 36px; flex: none; display: flex; align-items: center; padding-left: 14px; background: #fff; }
.nav { width: 16px; height: 16px; margin-right: 16px; }
.omnibox { width: 1086px; height: 28px; margin-left: -2px; border-radius: 14px; background: #f1f3f4; display: flex; align-items: center; padding: 0 10px; }
.info { width: 16px; height: 16px; }
.url { flex: 1; margin-left: 8px; font: 13.600px/20px "Open Sans", "Noto Sans", sans-serif; letter-spacing: -0.26px; color: #5f6368; }
.url b { font-weight: 400; color: #202124; }
.zoomout { width: 16px; height: 16px; margin-right: 16px; }
.star { width: 16px; height: 16px; }
.extensions { display: flex; align-items: center; }
.ff { width: 16px; height: 12px; margin: 0 16px 0 14px; }
.ext { width: 16px; height: 16px; margin-right: 15px; }
.ext.music { margin: 0 14px 0 1px; }
.avatar { width: 22px; height: 22px; margin-left: -1px; border-radius: 50%; background: #004d40; color: #fff; font: 12px/22px Roboto, sans-serif; text-align: center; }
.dots { width: 4px; height: 16px; margin-left: 20px; }

.bookmarks { height: 33px; flex: none; display: flex; align-items: center; padding: 0 0 3px 15px; border-bottom: 1px solid #d5d7da; font: 12px/16px "Open Sans", "Noto Sans", sans-serif; color: #3c4043; }
.appsgrid { width: 13px; height: 13px; }
.bm { margin: -2px 0 0 10px; letter-spacing: -0.35px; }
.bm.squadra { letter-spacing: -0.5px; }
.folder { width: 12px; height: 14px; margin-left: 18px; }

.jheader { height: 36px; flex: none; display: flex; align-items: center; background: #000; color: #fff; }
.jbutler { width: 30px; height: 33px; margin: 3px 0 0 16px; }
.brand { width: 108px; margin: -3px 0 0 4px; font: bold 24px/30px "DejaVu Serif", serif; letter-spacing: 0.45px; }
.alert { width: 36px; height: 36px; margin-left: 747px; background: #e11b1b; font: bold 18px/36px "Liberation Sans", sans-serif; text-align: center; }
.searchbox { width: 231px; height: 22px; margin: -4px 0 0 10px; border-radius: 3px; background: #fff; color: #666; display: flex; align-items: center; padding-left: 2px; }
.searchbox span { margin-top: 1px; }
.lens { width: 17px; height: 17px; }
.help { width: 14px; height: 14px; margin: -2px 0 0 3px; }
.admin { margin: 2px 0 0 23px; font-weight: bold; letter-spacing: -0.08px; }
.logout { margin: 2px 0 0 18px; font-weight: bold; }

.crumbbar { height: 23px; flex: none; display: flex; align-items: center; padding: 1px 23px 0 16px; background: #f6faf2; border-bottom: 1px solid #d3d7cf; color: #4d545d; }
.crumb { line-height: 22px; }
.sep { width: 4px; height: 8px; margin: 0 14.600px 0 19px; }
.auto { margin-left: auto; font-size: 8.500px; letter-spacing: -0.22px; color: #4a6285; }

.content { flex: 1; display: flex; min-height: 0; }
.side { width: 338px; padding: 11.400px 0 0 14px; }
.task { height: 28.800px; display: flex; align-items: center; color: #204a87; font-size: 12.500px; letter-spacing: 0.05px; }
.task.seen { color: #5c3566; }
.taskicon { width: 24px; height: 24px; margin-top: 1px; }
.task span { margin-left: 4.500px; line-height: 18px; }
.panel { width: 1015px; }
h1 { margin: 22px 0 0; font-size: 24px; line-height: 32px; letter-spacing: -0.32px; }
.fails { margin-top: 7px; height: 16px; line-height: 16px; }
.bar { height: 12px; background: #729fcf; }
.totals { display: flex; flex-direction: column; align-items: flex-end; line-height: 16px; }
.desc { height: 16px; display: flex; align-items: center; }
.mini { width: 15px; height: 15px; margin-top: 2px; }
h2 { margin: 24px 0 0; font-size: 18px; line-height: 20px; letter-spacing: -0.32px; }
.table { margin-top: 13px; border: 1px solid #bbb; border-bottom: 0; }
.row { height: 21px; display: flex; align-items: center; border-bottom: 1px solid #bbb; }
.row:nth-child(odd) { background: #fbfbfb; }
.row.head { background: #ededed; color: #000; border-bottom-color: #ededed; }
.name { width: 868px; padding-left: 3px; }
.time { width: 78px; }
.pass { color: #204a87; }

.foot { height: 38px; flex: none; display: flex; align-items: center; justify-content: flex-end; padding: 0 13px 1px 0; border-top: 1px solid #d3d7cf; background: #f6faf2; font-size: 11px; letter-spacing: -0.12px; }
.rest { margin: 0 14px; }

.taskbar { height: 40px; flex: none; display: flex; background: linear-gradient(90deg, #20383f, #20343f 55%, #1b2940 85%, #1a2742); color: #fff; }
.start { width: 48px; display: flex; align-items: center; justify-content: center; }
.start svg { width: 16px; height: 16px; }
.winsearch { width: 344px; display: flex; align-items: center; background: #f1f1f1; border: 1px solid #b9bbb9; color: #333; padding-left: 11px; font: 15px/20px "Open Sans", "Noto Sans", sans-serif; letter-spacing: -0.27px; }
.winsearch svg { width: 17px; height: 17px; margin-right: 11px; }
.sys { width: 48px; display: flex; align-items: center; justify-content: center; }
.sys svg { width: 16px; height: 16px; }
.view { width: 51px; padding-right: 3px; }
.apps { display: flex; gap: 1px; }
.app { width: 48px; height: 40px; display: flex; align-items: center; justify-content: center; position: relative; }
.app::after { content: ""; position: absolute; left: 4px; right: 4px; bottom: 0; height: 2px; background: #76b9ed; }
.app.idle::after { display: none; }
.app.stacked::after { background: linear-gradient(90deg, #76b9ed 32px, #4d7ba0 32px); }
.app.current { background: #4c616a; }
.app.current::after { left: 0; right: 0; }
.app.lit { background: #36444f; }
.app.lit::after { left: 0; right: 0; background: linear-gradient(90deg, #76b9ed 44px, #4d7ba0 44px); }
.appicon { width: 24px; height: 24px; }
.profile { position: absolute; left: 22px; top: 18px; width: 16px; height: 16px; border-radius: 50%; background: #004d40; font: 10px/16px Roboto, sans-serif; text-align: center; }
.tray { margin-left: auto; display: flex; align-items: center; width: 249px; font: 12px/17px "Open Sans", "Noto Sans", sans-serif; }
.chev { width: 12px; height: 8px; }
.batt { width: 17px; height: 12px; margin-left: 10px; }
.wifi { width: 13px; height: 13px; margin: 2px 0 0 10px; }
.vol { width: 16px; height: 13px; margin-left: 8px; }
.lang { width: 37px; margin-left: 10px; display: flex; flex-direction: column; letter-spacing: -0.4px; }
.clock { width: 57px; display: flex; flex-direction: column; align-items: center; letter-spacing: -0.62px; }
.lang, .clock { margin-top: -1px; }
.notif { width: 24px; height: 24px; margin-left: 18px; position: relative; }
.notif svg { width: 16px; height: 15px; margin-top: 2px; }
.count { position: absolute; left: 8px; top: 8px; width: 16px; height: 16px; border-radius: 50%; border: 1px solid #a9aaae; background: #45464a; font-size: 11px; line-height: 14px; text-align: center; letter-spacing: 0; }
.peek { width: 1px; height: 40px; margin-left: 12px; background: #5a6578; }
</style>
